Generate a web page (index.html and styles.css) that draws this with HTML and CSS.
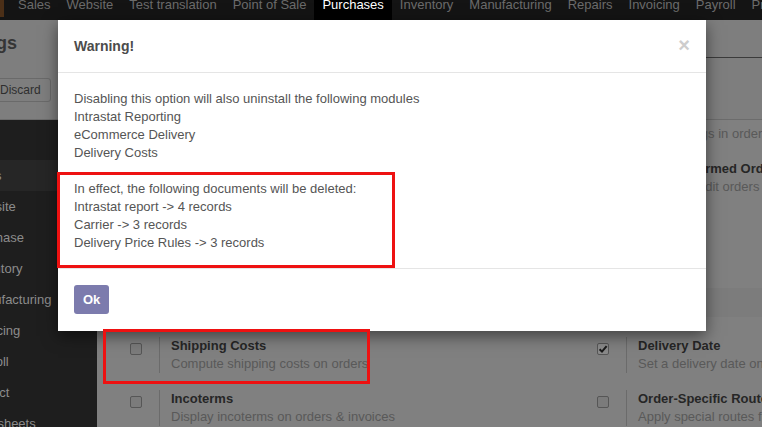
FILE: index.html
```html
<!DOCTYPE html>
<html lang="en">
<head>
  <meta charset="UTF-8">
  <meta name="viewport" content="width=device-width, initial-scale=1">
  <title>Settings</title>
  <link rel="stylesheet" href="styles.css">
</head>
<body>
  <!-- App menu -->
  <nav class="topbar">
    <span class="app-logo"></span>
    <ul class="menu">
      <li>Sales</li>
      <li>Website</li>
      <li>Test translation</li>
      <li>Point of Sale</li>
      <li class="active">Purchases</li>
      <li>Inventory</li>
      <li>Manufacturing</li>
      <li>Repairs</li>
      <li>Invoicing</li>
      <li>Payroll</li>
      <li>Project</li>
    </ul>
  </nav>

  <div class="app">
    <div class="control-panel">
      <div class="cp-left">
        <h1 class="breadcrumb">Settings</h1>
        <div class="cp-buttons">
          <button type="button" class="btn">Discard</button>
        </div>
      </div>
      <div class="cp-right">
        <div class="searchview"></div>
      </div>
    </div>

    <div class="workspace">
      <aside class="sidebar">
        <ul>
          <li class="active">Sales</li>
          <li>Website</li>
          <li>Purchase</li>
          <li>Inventory</li>
          <li>Manufacturing</li>
          <li>Invoicing</li>
          <li>Payroll</li>
          <li>Project</li>
          <li>Timesheets</li>
        </ul>
      </aside>

      <main class="settings">
        <div class="settings-scroll">
          <div class="setting-grid">
            <div class="setting">
              <div class="setting-left"><span class="check"></span></div>
              <div class="setting-right">
                <div class="setting-label">Purchase Agreements</div>
                <div class="setting-help">Manage your purchase agreements</div>
              </div>
            </div>
            <div class="setting">
              <div class="setting-left"><span class="check"></span></div>
              <div class="setting-right">
                <div class="setting-label">Warnings</div>
                <div class="setting-help">Get warnings in orders for products or vendors</div>
              </div>
            </div>
            <div class="setting">
              <div class="setting-left"><span class="check"></span></div>
              <div class="setting-right">
                <div class="setting-label">Purchase Order Approval</div>
                <div class="setting-help">Managers must approve orders</div>
              </div>
            </div>
            <div class="setting">
              <div class="setting-left"><span class="check"></span></div>
              <div class="setting-right">
                <div class="setting-label">Lock Confirmed Orders</div>
                <div class="setting-help">No longer edit orders once confirmed</div>
              </div>
            </div>
            <div class="setting">
              <div class="setting-left"><span class="check"></span></div>
              <div class="setting-right">
                <div class="setting-label">Vendor Bills</div>
                <div class="setting-help">Bill control policy</div>
              </div>
            </div>
          </div>

          <h2 class="section-title">Logistics</h2>

          <div class="setting-grid">
            <div class="setting">
              <div class="setting-left"><span class="check"></span></div>
              <div class="setting-right">
                <div class="setting-label">Shipping Costs</div>
                <div class="setting-help">Compute shipping costs on orders</div>
              </div>
            </div>
            <div class="setting">
              <div class="setting-left">
                <span class="check checked">
                  <svg viewBox="0 0 10 10" width="10" height="10"><path d="M1.6 5.2 L4 7.6 L8.6 2.2" fill="none" stroke="#1a1a1a" stroke-width="2"/></svg>
                </span>
              </div>
              <div class="setting-right">
                <div class="setting-label">Delivery Date</div>
                <div class="setting-help">Set a delivery date on orders</div>
              </div>
            </div>
            <div class="setting">
              <div class="setting-left"><span class="check"></span></div>
              <div class="setting-right">
                <div class="setting-label">Incoterms</div>
                <div class="setting-help">Display incoterms on orders &amp; invoices</div>
              </div>
            </div>
            <div class="setting">
              <div class="setting-left"><span class="check"></span></div>
              <div class="setting-right">
                <div class="setting-label">Order-Specific Routes</div>
                <div class="setting-help">Apply special routes from orders</div>
              </div>
            </div>
          </div>
        </div>
      </main>
    </div>
  </div>

  <!-- Warning dialog -->
  <div class="modal">
    <div class="modal-header">
      <h4 class="modal-title">Warning!</h4>
      <button type="button" class="close">&times;</button>
    </div>
    <div class="modal-body">
      Disabling this option will also uninstall the following modules<br>
      Intrastat Reporting<br>
      eCommerce Delivery<br>
      Delivery Costs<br>
      <br>
      In effect, the following documents will be deleted:<br>
      Intrastat report -&gt; 4 records<br>
      Carrier -&gt; 3 records<br>
      Delivery Price Rules -&gt; 3 records
    </div>
    <div class="modal-footer">
      <button type="button" class="btn-primary">Ok</button>
    </div>
  </div>

  <!-- Red annotation boxes -->
  <div class="mark mark-dialog"></div>
  <div class="mark mark-shipping"></div>
</body>
</html>
```

FILE: styles.css
```css
/* Page (everything below the menu is already dimmed by the dialog backdrop) */
body {
  margin: 0;
  width: 762px;
  height: 427px;
  overflow: hidden;
  position: relative;
  font-family: "Liberation Sans", Arial, sans-serif;
  font-size: 13px;
  background: #808080;
}

/* Top menu */
.topbar {
  display: flex;
  height: 20px;
  background: #141414;
  overflow: hidden;
}
.app-logo {
  flex: none;
  width: 4px;
  height: 17px;
  margin-right: 6px;
  background: #4b2f17;
}
.menu {
  display: flex;
  margin: 0;
  padding: 0;
  list-style: none;
  white-space: nowrap;
}
.menu li {
  height: 20px;
  padding: 0 8px;
  line-height: 9px;
  color: #6b6b6b;
}
.menu li.active {
  background: #000;
  color: #fff;
}

/* Control panel */
.control-panel {
  display: grid;
  grid-template-columns: 1fr 1fr;
  height: 99px;
  background: #7e7e7e;
  border-bottom: 1px solid #6c6c6c;
}
.breadcrumb {
  margin: 11px 0 0 -54px;
  font-size: 18px;
  line-height: 24px;
  font-weight: bold;
  color: #353535;
}
.cp-buttons {
  margin-top: 23px;
}
.btn {
  margin-left: -10px;
  padding: 3px 9px;
  font: 12px/16px "Liberation Sans", Arial, sans-serif;
  color: #2e2e2e;
  background: #7e7e7e;
  border: 1px solid #6a6a6a;
  border-radius: 3px;
}
.searchview {
  margin-left: 20px;
  height: 37px;
  border-bottom: 1px solid #3b3b3b;
}

/* Sidebar + settings */
.workspace {
  display: flex;
  height: 307px;
}
.sidebar {
  flex: none;
  width: 97px;
  background: #1e1e1e;
  overflow: hidden;
}
.sidebar ul {
  margin: 40px 0 0;
  padding: 0;
  list-style: none;
}
.sidebar li {
  height: 31px;
  line-height: 31px;
  text-indent: -31px;
  white-space: nowrap;
  color: #8c8c8c;
}
.sidebar li.active {
  background: #262626;
}

.settings {
  flex: 1;
  overflow: hidden;
  padding-left: 21px;
}
.settings-scroll {
  margin-top: -13px;
}
.setting-grid {
  display: grid;
  grid-template-columns: 467px 467px;
  row-gap: 17px;
}
.section-title {
  height: 29px;
  margin: 39px 0 20px -21px;
  padding-left: 21px;
  font-size: 13px;
  line-height: 29px;
  color: #303030;
  background: #7c7c7c;
}
.setting {
  display: flex;
  height: 36px;
}
.setting-left {
  flex: none;
  width: 41px;
}
.check {
  display: block;
  width: 10px;
  height: 10px;
  margin: 6px 0 0 12px;
  border: 1px solid #565656;
  border-radius: 2px;
  background: #7b7b7b;
}
.check.checked {
  background: #8a8a8a;
}
.check svg {
  display: block;
}
.setting-right {
  padding-left: 11px;
  border-left: 1px solid #6b6b6b;
  line-height: 18px;
  white-space: nowrap;
}
.setting-label {
  font-weight: bold;
  color: #262626;
}
.setting-help {
  color: #595959;
}

/* Dialog */
.modal {
  position: absolute;
  left: 58px;
  top: 20px;
  width: 648px;
  background: #fff;
  color: #555;
  box-shadow: 0 5px 15px rgba(0,0,0,0.5);
}
.modal-header {
  display: flex;
  justify-content: space-between;
  padding: 15px 16px;
  border-bottom: 1px solid #e5e5e5;
}
.modal-title {
  margin: 0;
  font-size: 14px;
  line-height: 22px;
  font-weight: bold;
  color: #4c4c4c;
}
.close {
  margin-top: -3px;
  padding: 0;
  border: none;
  background: none;
  font: bold 20px/22px "Liberation Sans", Arial, sans-serif;
  color: #cdcdcd;
}
.modal-body {
  padding: 17px 16px 16px;
  line-height: 18px;
}
.modal-footer {
  padding: 16px 16px 17px;
  border-top: 1px solid #e5e5e5;
}
.btn-primary {
  padding: 6px 9px;
  border: none;
  border-radius: 3px;
  background: #7c7bad;
  color: #fff;
  font: bold 13px/17px "Liberation Sans", Arial, sans-serif;
}

/* Annotations */
.mark {
  position: absolute;
  border: 3px solid #ee1111;
}
.mark-dialog {
  left: 57px;
  top: 172px;
  width: 332px;
  height: 90px;
}
.mark-shipping {
  left: 103px;
  top: 329px;
  width: 261px;
  height: 49px;
}
```
